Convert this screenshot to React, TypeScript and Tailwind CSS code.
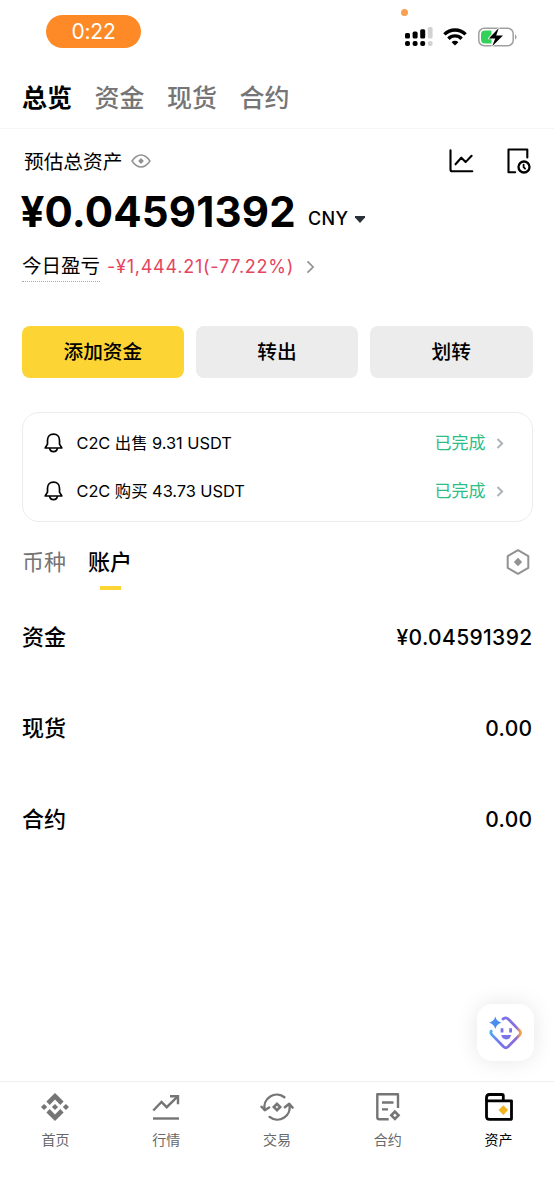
import { useState } from 'react';
import type { ReactNode } from 'react';
import clsx from 'clsx';

const topTabs = ['总览', '资金', '现货', '合约'];

const notices = [
  { title: 'C2C 出售 9.31 USDT', status: '已完成' },
  { title: 'C2C 购买 43.73 USDT', status: '已完成' },
];

const accounts = [
  { name: '资金', value: '¥0.04591392' },
  { name: '现货', value: '0.00' },
  { name: '合约', value: '0.00' },
];

const navigation = [
  { id: 'home', name: '首页', icon: <HomeIcon /> },
  { id: 'market', name: '行情', icon: <MarketIcon /> },
  { id: 'trade', name: '交易', icon: <TradeIcon /> },
  { id: 'futures', name: '合约', icon: <FuturesIcon /> },
  { id: 'assets', name: '资产', icon: <WalletIcon /> },
];

function SignalIcon() {
  return (
    <svg width="28" height="20" viewBox="0 0 28 20" fill="#000">
      <rect x="0" y="6" width="5" height="5.6" rx="1.6" />
      <rect x="7.6" y="4.6" width="5" height="7" rx="1.6" />
      <rect x="15.2" y="2.2" width="5" height="9.4" rx="1.6" />
      <rect x="22.8" y="0" width="4.8" height="11.6" rx="1.6" fill="#d2d2d2" />
      <rect x="0" y="14" width="5" height="5" rx="2" />
      <rect x="7.6" y="14" width="5" height="5" rx="2" />
      <rect x="15.2" y="14" width="5" height="5" rx="2" />
      <rect x="22.8" y="14" width="4.8" height="5" rx="2" fill="#d2d2d2" />
    </svg>
  );
}

function WifiIcon() {
  return (
    <svg width="24" height="18" viewBox="0 0 24 18" fill="none" stroke="#000" strokeWidth="3.4">
      <path d="M1.4 6.4a15 15 0 0 1 21.2 0" />
      <path d="M5.4 10.7a9.2 9.2 0 0 1 13.2 0" />
      <path d="M12 17.6l-3.4-3.4a4.7 4.7 0 0 1 6.8 0z" fill="#000" stroke="none" />
    </svg>
  );
}

function BatteryIcon() {
  return (
    <svg width="39" height="20" viewBox="0 0 39 20" fill="none">
      <rect x="0.8" y="1.3" width="34.4" height="17.4" rx="5.4" stroke="#a0a0a0" strokeWidth="1.5" />
      <path d="M7 3.4h6.5v13.2H7a4 4 0 0 1-4-4V7.4a4 4 0 0 1 4-4z" fill="#32d158" />
      <path d="M37 7.2v5.6q1.6-1 1.6-2.8t-1.6-2.8z" fill="#a0a0a0" />
      <path d="M20.8 1L10.8 11.4h6.4L14.2 19.2 25 8.6h-6.8z" fill="#000" stroke="#fff" strokeWidth="1.6" paintOrder="stroke" strokeLinejoin="round" />
    </svg>
  );
}

function EyeIcon() {
  return (
    <svg width="20" height="14" viewBox="0 0 20 14" fill="none" stroke="#929292" strokeWidth="1.5" strokeLinejoin="round">
      <path d="M1 7c2.4-3.4 5.4-6 9-6s6.6 2.6 9 6c-2.4 3.4-5.4 6-9 6s-6.6-2.6-9-6z" />
      <path d="M10 4.1L12.9 7 10 9.9 7.1 7z" fill="#929292" stroke="none" />
    </svg>
  );
}

function LineChartIcon() {
  return (
    <svg width="25" height="24" viewBox="0 0 25 24" fill="none" stroke="#000" strokeWidth="2.1" strokeLinecap="round" strokeLinejoin="round">
      <path d="M1.5 1.2v19.3a1.8 1.8 0 0 0 1.8 1.8h20" />
      <path d="M6.5 15.3l5.8-6.6 4.3 4.4 6-6.3" />
    </svg>
  );
}

function HistoryIcon() {
  return (
    <svg width="24" height="26" viewBox="0 0 24 26" fill="none" stroke="#000" strokeWidth="2.1" strokeLinecap="round" strokeLinejoin="round">
      <path d="M20.3 9.5V1.5H1.5v22.8h6.7" />
      <circle cx="17" cy="19" r="5.5" strokeWidth="2.3" />
      <path d="M16.6 16.6v2.6l1.5 1.5" strokeWidth="1.8" />
    </svg>
  );
}

function BellIcon() {
  return (
    <svg width="19" height="20" viewBox="0 0 19 20" fill="none" stroke="#000" strokeWidth="1.7" strokeLinejoin="round">
      <path d="M9.5 1.2c-3.7 0-6 2.5-6 6v3.9L1.2 15h16.6l-2.3-3.9V7.2c0-3.5-2.3-6-6-6z" />
      <path d="M5.6 15.2c.3 2.3 1.8 3.5 3.9 3.5s3.6-1.2 3.9-3.5" />
    </svg>
  );
}

function Chevron({ className, strokeWidth }: { className: string; strokeWidth: number }) {
  return (
    <svg className={className} viewBox="0 0 8 12" fill="none" stroke="currentColor" strokeWidth={strokeWidth}>
      <path d="M1.3 1l5 5-5 5" />
    </svg>
  );
}

function HexagonIcon() {
  return (
    <svg width="24" height="26" viewBox="0 0 24 26" fill="none" stroke="#929292" strokeWidth="2" strokeLinejoin="round">
      <path d="M12 1.2l10.3 5.9v11.8L12 24.8 1.7 18.9V7.1z" />
      <path d="M12 8.8l4.2 4.2-4.2 4.2L7.8 13z" fill="#929292" stroke="none" />
    </svg>
  );
}

function HomeIcon() {
  return (
    <svg width="28" height="28" viewBox="0 0 28 28" fill="#757575">
      <path d="M14 0l8.6 8.6-3.3 3.3L14 6.6l-5.3 5.3-3.3-3.3z" />
      <path d="M14 28l8.6-8.6-3.3-3.3-5.3 5.3-5.3-5.3-3.3 3.3z" />
      <path d="M14 10.9l3.1 3.1-3.1 3.1-3.1-3.1z" />
      <path d="M3.1 10.9L6.2 14l-3.1 3.1L0 14z" />
      <path d="M24.9 10.9L28 14l-3.1 3.1-3.1-3.1z" />
    </svg>
  );
}

function MarketIcon() {
  return (
    <svg width="28" height="28" viewBox="0 0 28 28" fill="none" stroke="#757575" strokeWidth="2.4">
      <path d="M1.3 17.5l8.2-8.6 5.2 5.3L25.5 3.6" />
      <path d="M18 3.2h8v8" />
      <path d="M1 25.5h26" />
    </svg>
  );
}

function TradeIcon() {
  return (
    <svg width="34" height="28" viewBox="0 0 34 28" fill="none" stroke="#757575" strokeWidth="2.4" strokeLinecap="round" strokeLinejoin="round">
      <path d="M24.4 4.3A12.3 12.3 0 0 0 4.7 16.5" />
      <path d="M1.5 13.7l3.3 3.5 4.3-2.8" />
      <path d="M9.6 23.9a12.3 12.3 0 0 0 19.7-12.4" />
      <path d="M24.9 14.2l4.3-3.4 3.4 3.8" />
      <path d="M17 10.8l3.2 3.2-3.2 3.2-3.2-3.2z" strokeWidth="2.6" strokeLinejoin="miter" />
    </svg>
  );
}

function FuturesIcon() {
  return (
    <svg width="26" height="28" viewBox="0 0 26 28" fill="none" stroke="#757575" strokeWidth="2.4" strokeLinejoin="round">
      <path d="M23 15V1.3H2.3v22.9q0 2 2 2h9.4" />
      <path d="M7 9.5h11.5M7 16.4h6" />
      <path d="M19.9 18.7l3.6 3.6-3.6 3.6-3.6-3.6z" strokeWidth="2.6" strokeLinejoin="miter" />
    </svg>
  );
}

function WalletIcon() {
  return (
    <svg width="28" height="28" viewBox="0 0 28 28" fill="none" stroke="#000" strokeWidth="2.8" strokeLinejoin="round">
      <path d="M1.5 7.8h25v17.4q0 1.2-1.2 1.2H4.5q-3 0-3-3z" />
      <path d="M1.5 8V4.5q0-3 3-3H17q1.3 0 1.3 1.3v5" />
      <path d="M18.3 12.3l4.8 4.8-4.8 4.8-4.8-4.8z" fill="#f0b51d" stroke="none" />
    </svg>
  );
}

function AssistantIcon() {
  return (
    <svg width="34" height="34" viewBox="0 0 34 34" fill="none">
      <defs>
        <linearGradient id="face" x1="0" y1="17" x2="34" y2="17" gradientUnits="userSpaceOnUse">
          <stop offset="0" stopColor="#43b4f8" />
          <stop offset="0.3" stopColor="#7775ee" />
          <stop offset="0.8" stopColor="#8a6bdd" />
          <stop offset="0.92" stopColor="#f1a34e" />
          <stop offset="1" stopColor="#f6b444" />
        </linearGradient>
      </defs>
      <path d="M14 3q3-2.2 5.2 0l11.4 11.6q2 2.2 0 4.4L19 30.8q-2.2 2-4.4 0L3 18.9q-1.7-1.9-.8-3.7" stroke="url(#face)" strokeWidth="2.8" strokeLinecap="round" />
      <path d="M6.3.6q1.2 5 6.2 6.2-5 1.2-6.2 6.2Q5.1 8 .1 6.8 5.1 5.6 6.3.6z" fill="#4a8dee" />
      <path d="M13 12.2v4.4M21.6 12.2v4.4" stroke="#7a74e8" strokeWidth="2.8" />
      <path d="M12.3 19h9.8q-.8 4.4-4.9 4.4t-4.9-4.4z" fill="#7a74e8" />
    </svg>
  );
}

function NavItem({ name, icon, active }: { name: string; icon: ReactNode; active: boolean }) {
  return (
    <button className="flex flex-1 flex-col items-center pt-[11px]">
      {icon}
      <span className={clsx('mt-[8px] text-[14px] leading-[22px]', active ? 'text-black' : 'text-[#686868]')}>{name}</span>
    </button>
  );
}

export default function App() {
  const [tab, setTab] = useState('总览');

  return (
    <div className="relative flex h-[1199px] w-[554px] flex-col overflow-hidden bg-white font-['Open_Sans','Noto_Sans_CJK_SC',sans-serif] text-black">
      {/* Status bar */}
      <div className="flex h-[66px] items-start justify-between pr-[37px] pl-[46px]">
        <div className="mt-[15px] flex h-[33px] w-[95px] items-center justify-center rounded-full bg-[#fd8a26] font-['Inter',sans-serif] text-[21px] tracking-[-0.2px] text-white">
          0:22
        </div>
        <div className="relative mt-[27px] flex items-center">
          <span className="absolute -top-[18px] -left-[4px] size-[7px] rounded-full bg-[#f9a050]" />
          <SignalIcon />
          <span className="w-[10px]" />
          <WifiIcon />
          <span className="w-[11px]" />
          <BatteryIcon />
        </div>
      </div>

      <div className="flex h-[63px] items-center gap-[22.5px] border-b border-[#f5f5f5] pl-[22px]">
        {topTabs.map((name) => (
          <button
            key={name}
            onClick={() => setTab(name)}
            className={clsx('text-[25px] leading-[36px]', name === tab ? 'font-bold text-black' : 'font-medium text-[#757575]')}
          >
            {name}
          </button>
        ))}
      </div>

      {/* Total balance */}
      <div className="flex h-[64px] items-center pr-[23px] pl-[24px]">
        <span className="mr-[8.5px] pt-[2px] text-[19.7px]">预估总资产</span>
        <EyeIcon />
        <div className="ml-auto flex items-center gap-[33px]">
          <LineChartIcon />
          <HistoryIcon />
        </div>
      </div>

      <div className="flex h-[40px] items-start pl-[20.5px] font-['Inter',sans-serif]">
        <span className="w-[275px] text-[42px] leading-[38px] font-bold tracking-[0.15px] whitespace-nowrap">¥0.04591392</span>
        <span className="mt-[14px] ml-[12.5px] text-[18px] leading-[24px] font-medium tracking-[0.3px]">CNY</span>
        <svg className="mt-[23px] ml-[7px]" width="10" height="7" viewBox="0 0 10 7" fill="#2b3139">
          <path d="M0 0h10v1.5L5 7 0 1.5z" />
        </svg>
      </div>

      <div className="mt-[19px] flex h-[31px] items-center pl-[22px]">
        <span className="h-[29px] border-b-[1.5px] border-dotted border-[#a8a8a8] text-[19.5px] leading-[26px]">今日盈亏</span>
        <span className="mb-[2px] ml-[7px] font-['Inter',sans-serif] text-[18px] leading-[27px] tracking-[0.75px] text-[#e5455f]">-¥1,444.21(-77.22%)</span>
        <Chevron className="mb-[1px] ml-[12px] h-[14px] w-[9px] text-[#929292]" strokeWidth={1.5} />
      </div>

      <div className="mx-[21.5px] mt-[43px] grid h-[52px] grid-cols-3 gap-[11.5px] text-[19.7px] font-medium">
        <button className="rounded-lg bg-[#fcd535]">添加资金</button>
        <button className="rounded-lg bg-[#ececec]">转出</button>
        <button className="rounded-lg bg-[#ececec]">划转</button>
      </div>

      {/* Latest C2C orders */}
      <div className="mx-[21.5px] mt-[34px] h-[110px] rounded-[17px] border-[1.5px] border-[#ececec] pt-[6px] pr-[28px] pl-[21px]">
        {notices.map((item) => (
          <div key={item.title} className="flex h-[48px] items-center">
            <BellIcon />
            <span className="ml-[14px] font-['Inter','Noto_Sans_CJK_SC',sans-serif] text-[16.4px] tracking-[-0.05px]">{item.title}</span>
            <span className="ml-auto text-[17px] text-[#2ebd85]">{item.status}</span>
            <Chevron className="ml-[10px] h-[11px] w-[8px] text-[#aeb4bc]" strokeWidth={2.2} />
          </div>
        ))}
      </div>

      <div className="mt-[17px] flex h-[52px] items-start pr-[24px] pl-[22px] text-[22px] leading-[45px]">
        <button className="text-[#757575]">币种</button>
        <button className="relative ml-[22px] font-medium">
          账户
          <span className="absolute bottom-[-6px] left-[12px] h-[4px] w-[21px] bg-[#fcd535]" />
        </button>
        <span className="mt-[10px] ml-auto">
          <HexagonIcon />
        </span>
      </div>

      {accounts.map((item) => (
        <div key={item.name} className="flex h-[91px] items-center justify-between pr-[21.5px] pl-[22px]">
          <span className="text-[22px] font-medium">{item.name}</span>
          <span className="pt-[2px] font-['Inter',sans-serif] text-[21px] font-medium tracking-[0.35px]">{item.value}</span>
        </div>
      ))}

      <button className="absolute top-[1004px] left-[477px] flex size-[57px] items-center justify-center rounded-[15px] bg-white shadow-[0_0_22px_rgba(0,0,0,0.1)]">
        <AssistantIcon />
      </button>

      <nav className="mt-auto flex h-[118px] border-t border-[#efefef]">
        {navigation.map((item) => (
          <NavItem key={item.id} name={item.name} icon={item.icon} active={item.id === 'assets'} />
        ))}
      </nav>
    </div>
  );
}
